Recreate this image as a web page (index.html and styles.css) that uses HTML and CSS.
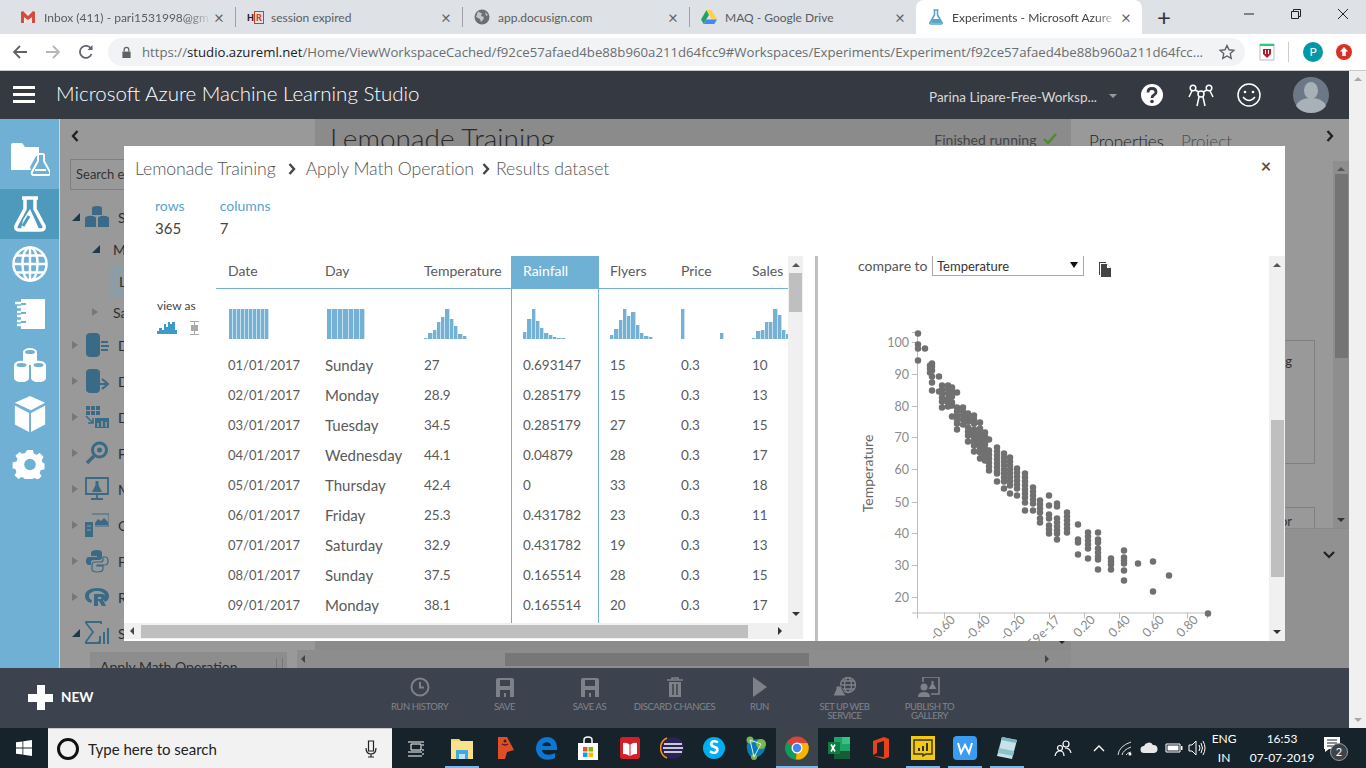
FILE: index.html
```html
<!doctype html>
<html>
    <head>
        <meta charset="utf-8">
        <title>Experiments - Microsoft Azure Machine Learning Studio</title>
        <link rel="stylesheet" href="styles.css">
    </head>
    <body>
        <section class="tabstrip">
            <div class="tab">
                <svg class="tab-icon" viewBox="0 0 16 16"><path fill="#e8e8e8" d="M1 3h14v11H1z"/><path fill="#d54b3d" d="M1 3h3v11H1zM12 3h3v11h-3zM1 3l2-1 5 5 5-5 2 1v3l-7 5-7-5z"/></svg>
                <span class="tab-title tab-fade">Inbox (411) - pari1531998@gm</span>
                <span class="tab-close">×</span>
            </div>
            <div class="tab">
                <span class="hr-icon">H<b>R</b></span>
                <span class="tab-title">session expired</span>
                <span class="tab-close">×</span>
            </div>
            <div class="tab">
                <svg class="tab-icon" viewBox="0 0 16 16"><circle cx="8" cy="8" r="7.500" fill="#6b6f74"/><path fill="#c3c6c9" d="M4 2.500l4 2-1 2.500 3 1-1 3-2 2-1-3-2-1-2-1zM11 3l3 3-2 1z"/></svg>
                <span class="tab-title">app.docusign.com</span>
                <span class="tab-close">×</span>
            </div>
            <div class="tab">
                <svg class="tab-icon" viewBox="0 0 16 16"><path fill="#1fa463" d="M5.500 1L0 10.500l2.700 4.500L8 5.700z"/><path fill="#ffd04b" d="M5.500 1h5L16 10.500h-5.300z"/><path fill="#4687f4" d="M2.700 15h10.600l2.700-4.500H5.300z"/></svg>
                <span class="tab-title">MAQ - Google Drive</span>
                <span class="tab-close">×</span>
            </div>
            <div class="tab tab-active">
                <svg class="tab-icon" viewBox="0 0 16 16"><path fill="none" stroke="#59a5c9" stroke-width="1.600" d="M5.500 1h5M6.500 1v5L2 13.500q-.6 1.500 1 1.500h10q1.600 0 1-1.500L9.500 6V1"/><path fill="#59a5c9" d="M4.500 10h7l2 4H3z"/></svg>
                <span class="tab-title tab-fade">Experiments - Microsoft Azure</span>
                <span class="tab-close">×</span>
            </div>
            <span class="new-tab">+</span>
            <div class="window-controls">
                <svg viewBox="0 0 12 12"><path d="M1 6h10" stroke="#222" fill="none"/></svg>
                <svg viewBox="0 0 12 12"><path d="M1.500 3.500h7v7h-7zM3.500 3.500v-2h7v7h-2" stroke="#222" fill="none"/></svg>
                <svg viewBox="0 0 12 12"><path d="M1 1l10 10M11 1L1 11" stroke="#222" fill="none"/></svg>
            </div>
        </section>

        <section class="toolbar">
            <svg class="nav-btn" viewBox="0 0 16 16"><path d="M15 8H2M8 2L2 8l6 6" fill="none" stroke="#5f6368" stroke-width="1.800"/></svg>
            <svg class="nav-btn" viewBox="0 0 16 16"><path d="M1 8h13M8 2l6 6-6 6" fill="none" stroke="#b4b7bb" stroke-width="1.800"/></svg>
            <svg class="nav-btn" viewBox="0 0 16 16"><path d="M13.500 10a6 6 0 1 1-.3-5" fill="none" stroke="#5f6368" stroke-width="1.800"/><path d="M14.500 1v5h-5z" fill="#5f6368"/></svg>
            <div class="urlbar">
                <svg class="lock" viewBox="0 0 12 14"><path d="M3.500 6V4a2.500 2.500 0 0 1 5 0v2" fill="none" stroke="#5f6368" stroke-width="1.400"/><path d="M1.500 6h9v7h-9z" fill="#5f6368"/></svg>
                <span class="url"><span class="url-scheme">https://</span><span class="url-host">studio.azureml.net</span>/Home/ViewWorkspaceCached/f92ce57afaed4be88b960a211d64fcc9#Workspaces/Experiments/Experiment/f92ce57afaed4be88b960a211d64fcc...</span>
                <svg class="star" viewBox="0 0 16 16"><path d="M8 1.500l2 4.300 4.700.6-3.400 3.200.9 4.700L8 12l-4.200 2.300.9-4.700L1.300 6.400 6 5.800z" fill="none" stroke="#5f6368" stroke-width="1.400"/></svg>
            </div>
            <svg class="ext-mcafee" viewBox="0 0 16 18"><path d="M1 1h14v16H1z" fill="#fff" stroke="#bbb"/><path d="M1 1h14v2H1z" fill="#2ecc71"/><path d="M4 6h8v5l-4 4-4-4z" fill="#b01a2a"/><path d="M6.500 7v4M9.500 7v4" stroke="#fff"/></svg>
            <span class="ext-sep"></span>
            <span class="avatar-small">P</span>
            <svg class="ext-up" viewBox="0 0 16 16"><circle cx="8" cy="8" r="8" fill="#d93025"/><path d="M8 3l4 4.500H9.800V12H6.200V7.500H4z" fill="#fff"/></svg>
        </section>

        <main class="studio">
            <div class="app">
                <header class="app-header">
                    <div class="hamburger"><i></i><i></i><i></i></div>
                    <h1 class="app-title">Microsoft Azure Machine Learning Studio</h1>
                    <span class="workspace">Parina Lipare-Free-Worksp...</span>
                    <span class="caret"></span>
                    <svg class="head-icon help" viewBox="0 0 24 24"><circle cx="12" cy="12" r="11" fill="#fff"/><path d="M8 9.500q0-4 4-4t4 3.500q0 2-2 3t-2 3" fill="none" stroke="#353a42" stroke-width="2.800"/><circle cx="12" cy="18.500" r="1.800" fill="#353a42"/></svg>
                    <svg class="head-icon people-icon" viewBox="0 0 26 24"><g fill="none" stroke="#fff" stroke-width="1.500"><circle cx="5" cy="5" r="2.800"/><circle cx="21" cy="5" r="2.800"/><circle cx="13" cy="11" r="3"/><path d="M1 14l3-6M11 9L7 7M15 9l4-2M25 14l-3-6M9 23l2-9M17 23l-2-9"/></g></svg>
                    <svg class="head-icon smile" viewBox="0 0 24 24"><circle cx="12" cy="12" r="11" fill="none" stroke="#fff" stroke-width="1.500"/><circle cx="8" cy="9" r="1.300" fill="#fff"/><circle cx="16" cy="9" r="1.300" fill="#fff"/><path d="M6 14q6 7 12 0" fill="none" stroke="#fff" stroke-width="1.500"/></svg>
                    <svg class="avatar" viewBox="0 0 36 36"><circle cx="18" cy="18" r="18" fill="#6c7888"/><ellipse cx="18" cy="13.500" rx="7" ry="8.500" fill="#a8b0b8"/><path d="M3 29q3-8 15-8t15 8q-5 7-15 7T3 29z" fill="#a8b0b8"/></svg>
                </header>

                <div class="workarea">
                    <nav class="side-nav">
                        <div class="side-item">
                            <svg viewBox="0 0 40 34"><path d="M1 3q0-2 2-2h9l3 4h14v9h-3l-6 11 1 3H1z" fill="#fff"/><path d="M26 12h8M28 12v7l-6 11q-1 3 2 3h14q3 0 2-3l-6-11v-7M25 28h11" fill="none" stroke="#fff" stroke-width="2"/></svg>
                        </div>
                        <div class="side-item selected">
                            <svg viewBox="0 0 32 36"><path d="M8 2h16M11 3v10L2 30q-1 4 3 4h22q4 0 3-4l-9-17V3" fill="none" stroke="#fff" stroke-width="3.500"/><path d="M9 24l7-11 6 13 3 7H7z" fill="#fff"/><path d="M9 30l6-10" stroke="#4d9abd" stroke-width="3"/></svg>
                        </div>
                        <div class="side-item">
                            <svg viewBox="0 0 38 38"><g fill="none" stroke="#fff" stroke-width="2.600"><circle cx="19" cy="19" r="17.500"/><ellipse cx="19" cy="19" rx="8" ry="17.500"/><path d="M19 1v36M1 19h36M4 10h30M4 28h30"/></g></svg>
                        </div>
                        <div class="side-item">
                            <svg viewBox="0 0 30 30"><path d="M6 0h24v30H6z" fill="#fff"/><path d="M0 4h11q3 2 0 4H2M2 13h9q3 2 0 4H2M2 22h9q3 2 0 4H2" fill="none" stroke="#fff" stroke-width="2.400"/><path d="M6 5h5M6 14h5M6 23h5" stroke="#70b0d4" stroke-width="2"/></svg>
                        </div>
                        <div class="side-item">
                            <svg viewBox="0 0 32 36"><g fill="#fff"><path d="M9 6a7 4 0 0 1 14 0v9a7 4 0 0 1-14 0z"/><path d="M0 19a7 4 0 0 1 15 0v13a7 4 0 0 1-15 0z"/><path d="M17 19a7 4 0 0 1 15 0v13a7 4 0 0 1-15 0z"/></g><g fill="#70b0d4"><ellipse cx="16" cy="6" rx="5" ry="2"/><ellipse cx="7.500" cy="19" rx="5" ry="2"/><ellipse cx="24.500" cy="19" rx="5" ry="2"/></g></svg>
                        </div>
                        <div class="side-item">
                            <svg viewBox="0 0 32 38"><path d="M16 0l16 7-15 8L0 7zM0 10l15 8v20L0 30zM32 10v20l-15 8V18z" fill="#fff"/></svg>
                        </div>
                        <div class="side-item">
                            <svg viewBox="0 0 30 30"><path d="M12 0h6l1 4 3 1 3-2 4 4-2 4 1 2 2 1v6l-4 1-1 3 2 3-4 4-3-2-3 1-1 3h-6l-1-4-3-1-3 2-4-4 2-3-1-3-3-1v-6l4-1 1-3-2-3 4-4 3 2 3-1z" fill="#fff"/><circle cx="15" cy="15" r="6" fill="#70b0d4"/></svg>
                        </div>
                    </nav>

                    <aside class="palette">
                        <svg class="collapse" viewBox="0 0 8 12"><path d="M6.500 1L2 6l4.500 5" fill="none" stroke="#222" stroke-width="2.400"/></svg>
                        <div class="palette-search">Search experiment items</div>
                        <div class="tree">
                            <div class="tree-row tree-open">
                                <svg class="tree-icon" viewBox="0 0 24 24"><g fill="#3a6a85"><path d="M7 3a5 2 0 0 1 10 0v7H7z"/><path d="M0 13a5 2 0 0 1 11 0v9H0z"/><path d="M13 13a5 2 0 0 1 11 0v9H13z"/></g></svg>
                                <span>Saved Datasets</span>
                            </div>
                            <div class="tree-row tree-open tree-sub">
                                <span>My Datasets</span>
                            </div>
                            <div class="tree-row tree-leaf">
                                <span>Lemonade data</span>
                            </div>
                            <div class="tree-row tree-closed tree-sub tree-low">
                                <span>Samples</span>
                            </div>
                            <div class="tree-row tree-big tree-closed">
                                <svg class="tree-icon" viewBox="0 0 24 24"><path d="M1 3a6 3 0 0 1 14 0v18a6 3 0 0 1-14 0z" fill="#3a6a85"/><path d="M16 9h7M16 13h8M16 17h7" stroke="#3a6a85" stroke-width="2"/></svg>
                                <span>Data Format Conversions</span>
                            </div>
                            <div class="tree-row tree-big tree-closed">
                                <svg class="tree-icon" viewBox="0 0 24 24"><path d="M1 3a6 3 0 0 1 14 0v18a6 3 0 0 1-14 0z" fill="#3a6a85"/><path d="M12 15h9M17 10l6 5-6 5" fill="none" stroke="#3a6a85" stroke-width="2.200"/></svg>
                                <span>Data Input and Output</span>
                            </div>
                            <div class="tree-row tree-big tree-closed">
                                <svg class="tree-icon" viewBox="0 0 24 24"><path d="M1 1h14v9H1z" fill="#3a6a85"/><path d="M5.500 1v9M10.500 1v9M1 5.500h14" stroke="#999"/><path d="M1 11l7 7M8 13v5H3" fill="none" stroke="#3a6a85" stroke-width="1.500"/><path d="M10 13h14v10H10z" fill="#3a6a85"/><path d="M13 22v-4M17 22v-6M21 22v-5" stroke="#999" stroke-width="1.500"/></svg>
                                <span>Data Transformation</span>
                            </div>
                            <div class="tree-row tree-big tree-closed">
                                <svg class="tree-icon" viewBox="0 0 24 24"><circle cx="14.500" cy="9" r="7" fill="none" stroke="#3a6a85" stroke-width="3"/><circle cx="14.500" cy="9" r="2.500" fill="#3a6a85"/><path d="M9 15l-7 7" stroke="#3a6a85" stroke-width="3.500"/></svg>
                                <span>Feature Selection</span>
                            </div>
                            <div class="tree-row tree-big tree-closed">
                                <svg class="tree-icon" viewBox="0 0 24 24"><path d="M1 1h22v16H1zM12 17v4M6 22h12" fill="none" stroke="#3a6a85" stroke-width="1.800"/><path d="M9 4h6M10.500 4v4L7 15h10l-3.500-7V4" fill="#3a6a85"/></svg>
                                <span>Machine Learning</span>
                            </div>
                            <div class="tree-row tree-big tree-closed">
                                <svg class="tree-icon" viewBox="0 0 24 24"><path d="M0 9h8v15H0z" fill="#3a6a85"/><path d="M2 13h4M2 17h4" stroke="#999"/><path d="M7 1h17v12H10" fill="none" stroke="#3a6a85"/><path d="M10 10l3-4 3 2 3-3 4 4v3H10z" fill="#3a6a85"/></svg>
                                <span>OpenCV Library Modules</span>
                            </div>
                            <div class="tree-row tree-big tree-closed">
                                <svg class="tree-icon" viewBox="0 0 24 24"><path d="M12 1q-6 0-6 3v3h6v1H4q-3 0-3 4t3 4h2v-3q0-2 3-2h5q3 0 3-3V4q0-3-5-3z" fill="#3a6a85"/><path d="M12 23q6 0 6-3v-3h-6v-1h8q3 0 3-4t-3-4h-2v3q0 2-3 2H10q-3 0-3 3v4q0 3 5 3z" fill="none" stroke="#3a6a85" stroke-width="1.200"/></svg>
                                <span>Python Language Modules</span>
                            </div>
                            <div class="tree-row tree-big tree-closed">
                                <svg class="tree-icon" viewBox="0 0 24 24"><path d="M12 3C5 3 0 6 0 11c0 4 3 6 6 7l1-3q-3-1-3-4c0-3 4-5 8-5s8 2 8 5q0 2-2 3l2 3q4-2 4-6c0-5-5-8-12-8z" fill="#3a6a85"/><path d="M9 9h8q3 0 3 3 0 2-2 3l3 6h-4l-3-5h-1v5H9zm4 3v2h3q1-1 0-2z" fill="#3a6a85"/></svg>
                                <span>R Language Modules</span>
                            </div>
                            <div class="tree-row tree-big tree-open">
                                <svg class="tree-icon" viewBox="0 0 24 24"><path d="M16 3V1H1v1l7 9-8 11h14v-2" fill="none" stroke="#3a6a85" stroke-width="1.800"/><path d="M14 15h2v8h-2zM18 11h2v12h-2zM22 7h2v16h-2z" fill="#3a6a85"/></svg>
                                <span>Statistical Functions</span>
                            </div>
                            <div class="tree-module">Apply Math Operation<span class="grip"></span></div>
                        </div>
                    </aside>

                    <div class="canvas">
                        <div class="canvas-head">
                            <span class="canvas-title">Lemonade Training</span>
                            <span class="canvas-status">Finished running <svg viewBox="0 0 14 12"><path d="M1 6l4 4 8-9" fill="none" stroke="#4c8c2b" stroke-width="2.400"/></svg></span>
                        </div>
                        <div class="canvas-fill"></div>
                        <div class="canvas-scroll">
                            <i class="arrow-left"></i>
                            <span class="canvas-thumb"></span>
                            <i class="arrow-right"></i>
                        </div>
                    </div>

                    <aside class="properties">
                        <div class="properties-tabs">
                            <span class="prop-active">Properties</span><span>Project</span>
                            <svg class="prop-chevron" viewBox="0 0 8 12"><path d="M1.500 1L6 6l-4.500 5" fill="none" stroke="#222" stroke-width="2.400"/></svg>
                        </div>
                        <div class="prop-body">
                            <div class="prop-content">
                                <div class="prop-box">logging</div>
                                <div class="prop-box prop-box-cut">for</div>
                            </div>
                            <div class="prop-scroll"><i class="arrow-up"></i><span></span><i class="arrow-down"></i></div>
                        </div>
                        <div class="prop-footer"><svg viewBox="0 0 12 8"><path d="M1 1l5 5 5-5" fill="none" stroke="#222" stroke-width="2.200"/></svg></div>
                    </aside>
                </div>

                <footer class="commands">
                    <div class="new-btn"><span class="new-plus"></span>NEW</div>
                    <div class="command">
                        <svg viewBox="0 0 20 20"><circle cx="10" cy="10" r="8.500" fill="none" stroke="#7d8288" stroke-width="2"/><path d="M10 5v5.500h4" fill="none" stroke="#7d8288" stroke-width="2"/></svg>
                        <span>RUN HISTORY</span>
                    </div>
                    <div class="command">
                        <svg viewBox="0 0 20 20"><path d="M1 3q0-2 2-2h14q2 0 2 2v17H1z" fill="#7d8288"/><path d="M5 3h10v6H5zM5 13h10v7H5z" fill="#3d434e"/><path d="M9 16h2v4H9z" fill="#7d8288"/></svg>
                        <span>SAVE</span>
                    </div>
                    <div class="command">
                        <svg viewBox="0 0 20 20"><path d="M1 3q0-2 2-2h14q2 0 2 2v17H1z" fill="#7d8288"/><path d="M5 3h10v6H5zM5 13h10v7H5z" fill="#3d434e"/><path d="M9 16h2v4H9z" fill="#7d8288"/></svg>
                        <span>SAVE AS</span>
                    </div>
                    <div class="command">
                        <svg viewBox="0 0 20 20"><path d="M2 3h16M7 3V1h6v2" fill="none" stroke="#7d8288" stroke-width="1.600"/><path d="M4 5h12v15H4z" fill="#7d8288"/><path d="M8 7v11M12 7v11" stroke="#3d434e" stroke-width="1.500"/></svg>
                        <span>DISCARD CHANGES</span>
                    </div>
                    <div class="command">
                        <svg viewBox="0 0 20 20"><path d="M3 0l14 10L3 20z" fill="#7d8288"/></svg>
                        <span>RUN</span>
                    </div>
                    <div class="command">
                        <svg class="wide" viewBox="0 0 24 20"><g fill="none" stroke="#7d8288" stroke-width="1.300"><circle cx="15" cy="8" r="7.500"/><ellipse cx="15" cy="8" rx="3.500" ry="7.500"/><path d="M7.500 8h15M8.500 4h13M8.500 12h13"/></g><path d="M3 9h6v3l4 7H0l3-7z" fill="#7d8288" stroke="#3d434e"/></svg>
                        <span>SET UP WEB SERVICE</span>
                    </div>
                    <div class="command">
                        <svg class="wide" viewBox="0 0 24 20"><path d="M5 5V0h16v17H13" fill="none" stroke="#7d8288" stroke-width="1.600"/><circle cx="6" cy="10" r="3.500" fill="#7d8288"/><path d="M0 20q0-5 6-5t6 5z" fill="#7d8288"/><path d="M12 4h5M13.500 4v3l-3 5h8l-3-5V4" fill="#7d8288"/></svg>
                        <span>PUBLISH TO GALLERY</span>
                    </div>
                </footer>
            </div>

            <div class="page-scroll"><i class="arrow-up"></i><i class="arrow-down"></i></div>

            <section class="modal">
                <div class="modal-title">
                    <span>Lemonade Training</span><svg viewBox="0 0 8 12"><path d="M1.500 1L6 6l-4.500 5" fill="none" stroke="#444" stroke-width="2.400"/></svg>
                    <span>Apply Math Operation</span><svg viewBox="0 0 8 12"><path d="M1.500 1L6 6l-4.500 5" fill="none" stroke="#444" stroke-width="2.400"/></svg>
                    <span>Results dataset</span>
                    <span class="modal-close">×</span>
                </div>
                <div class="stats">
                    <div class="stat"><span>rows</span><b>365</b></div>
                    <div class="stat"><span>columns</span><b>7</b></div>
                </div>
                <div class="results">
                    <div class="table-pane">
                        <div class="table-row-wrap">
                            <div class="view-as">
                                <span>view as</span>
                                <div class="view-icons">
                                    <svg viewBox="0 0 20 12"><path d="M0 12V9h2V6h3v2h2V2h2v3h2V0h2v2h2V0h3v8h2v4z" fill="#3b9bca"/></svg>
                                    <svg viewBox="0 0 9 14"><path d="M0 .5h9M0 13.500h9M4.500 0v14" stroke="#a8a8a8"/><path d="M1 4h7v6H1z" fill="#a8a8a8"/></svg>
                                </div>
                            </div>
                            <div class="table-wrap">
                                <table class="data">
                                    <colgroup><col class="c-date"><col class="c-day"><col class="c-temp"><col class="c-rain"><col class="c-num"><col class="c-num"><col class="c-num"></colgroup>
                                    <thead>
                                        <tr><th>Date</th><th>Day</th><th>Temperature</th><th class="sel">Rainfall</th><th>Flyers</th><th>Price</th><th>Sales</th></tr>
                                    </thead>
                                    <tbody>
                                        <tr class="hist-row">
                                            <td><div class="hist hist-date"><i style="height:30px"></i><i style="height:30px"></i><i style="height:30px"></i><i style="height:30px"></i><i style="height:30px"></i><i style="height:30px"></i><i style="height:30px"></i><i style="height:30px"></i><i style="height:30px"></i><i style="height:30px"></i></div></td>
                                            <td><div class="hist hist-day"><i style="height:30px"></i><i style="height:30px"></i><i style="height:30px"></i><i style="height:30px"></i><i style="height:30px"></i><i style="height:30px"></i><i style="height:30px"></i></div></td>
                                            <td><div class="hist"><i style="height:1px"></i><i style="height:6px"></i><i style="height:9px"></i><i style="height:17px"></i><i style="height:22px"></i><i style="height:30px"></i><i style="height:20px"></i><i style="height:13px"></i><i style="height:5px"></i><i style="height:3px"></i></div></td>
                                            <td class="sel"><div class="hist"><i style="height:7px"></i><i style="height:20px"></i><i style="height:30px"></i><i style="height:18px"></i><i style="height:11px"></i><i style="height:6px"></i><i style="height:4px"></i><i style="height:2px"></i><i style="height:1px"></i><i style="height:1px"></i></div></td>
                                            <td><div class="hist"><i style="height:4px"></i><i style="height:10px"></i><i style="height:19px"></i><i style="height:30px"></i><i style="height:23px"></i><i style="height:27px"></i><i style="height:14px"></i><i style="height:6px"></i><i style="height:3px"></i><i style="height:2px"></i></div></td>
                                            <td><div class="hist"><i style="height:30px"></i><i style="height:0"></i><i style="height:0"></i><i style="height:0"></i><i style="height:0"></i><i style="height:0"></i><i style="height:0"></i><i style="height:0"></i><i style="height:0"></i><i style="height:6px"></i></div></td>
                                            <td><div class="hist"><i style="height:1px"></i><i style="height:8px"></i><i style="height:9px"></i><i style="height:17px"></i><i style="height:17px"></i><i style="height:30px"></i><i style="height:24px"></i><i style="height:9px"></i><i style="height:5px"></i><i style="height:2px"></i></div></td>
                                        </tr>
                                        <tr><td>01/01/2017</td><td>Sunday</td><td>27</td><td class="sel">0.693147</td><td>15</td><td>0.3</td><td>10</td></tr>
                                        <tr><td>02/01/2017</td><td>Monday</td><td>28.9</td><td class="sel">0.285179</td><td>15</td><td>0.3</td><td>13</td></tr>
                                        <tr><td>03/01/2017</td><td>Tuesday</td><td>34.5</td><td class="sel">0.285179</td><td>27</td><td>0.3</td><td>15</td></tr>
                                        <tr><td>04/01/2017</td><td>Wednesday</td><td>44.1</td><td class="sel">0.04879</td><td>28</td><td>0.3</td><td>17</td></tr>
                                        <tr><td>05/01/2017</td><td>Thursday</td><td>42.4</td><td class="sel">0</td><td>33</td><td>0.3</td><td>18</td></tr>
                                        <tr><td>06/01/2017</td><td>Friday</td><td>25.3</td><td class="sel">0.431782</td><td>23</td><td>0.3</td><td>11</td></tr>
                                        <tr><td>07/01/2017</td><td>Saturday</td><td>32.9</td><td class="sel">0.431782</td><td>19</td><td>0.3</td><td>13</td></tr>
                                        <tr><td>08/01/2017</td><td>Sunday</td><td>37.5</td><td class="sel">0.165514</td><td>28</td><td>0.3</td><td>15</td></tr>
                                        <tr><td>09/01/2017</td><td>Monday</td><td>38.1</td><td class="sel">0.165514</td><td>20</td><td>0.3</td><td>17</td></tr>
                                        <tr><td></td><td></td><td></td><td class="sel"></td><td></td><td></td><td></td></tr>
                                    </tbody>
                                </table>
                            </div>
                            <div class="vscroll"><i class="arrow-up"></i><span class="vthumb"></span><i class="arrow-down"></i></div>
                        </div>
                        <div class="hscroll"><i class="arrow-left"></i><span class="hthumb"></span><i class="arrow-right"></i></div>
                    </div>
                    <div class="splitter"></div>
                    <div class="chart-pane">
                        <div class="chart-main">
                            <div class="compare">
                                <span class="compare-label">compare to</span>
                                <div class="compare-select">Temperature<i></i></div>
                                <svg class="copy-icon" viewBox="0 0 12 15"><path d="M0 0h7v1H1v12H0z" fill="#444"/><path d="M2 2h6l4 4v9H2z" fill="#444"/><path d="M8 2v4h4" fill="#fff"/></svg>
                            </div>
                            <svg class="scatter" viewBox="818 284 451 356">
                                <g stroke="#bdbdbd" fill="none">
                                    <path d="M917.500 332V612.500M912 612.500H1208M912 332h5.500M912 342h5.500M912 374h5.500M912 406h5.500M912 437h5.500M912 469h5.500M912 502h5.500M912 533h5.500M912 565h5.500M912 597h5.500"/>
                                    <path d="M917.500 612v6M944.500 612v6M979.500 612v6M1014.500 612v6M1049.500 612v6M1084.500 612v6M1119.500 612v6M1153.500 612v6M1187.500 612v6M1207.500 612v6"/>
                                </g>
                                <g class="tick-y">
                                    <text x="909" y="346">100</text><text x="909" y="378">90</text><text x="909" y="410">80</text><text x="909" y="441">70</text><text x="909" y="473">60</text><text x="909" y="506">50</text><text x="909" y="537">40</text><text x="909" y="569">30</text><text x="909" y="601">20</text>
                                </g>
                                <g class="tick-x">
                                    <text transform="translate(956 620) rotate(-45)">-0.60</text>
                                    <text transform="translate(991 620) rotate(-45)">-0.40</text>
                                    <text transform="translate(1026 620) rotate(-45)">-0.20</text>
                                    <text transform="translate(1061 620) rotate(-45)">-5.59e-17</text>
                                    <text transform="translate(1096 620) rotate(-45)">0.20</text>
                                    <text transform="translate(1131 620) rotate(-45)">0.40</text>
                                    <text transform="translate(1165 620) rotate(-45)">0.60</text>
                                    <text transform="translate(1199 620) rotate(-45)">0.80</text>
                                </g>
                                <text class="axis-label" transform="translate(873 473) rotate(-90)">Temperature</text>
                                <path class="dots" d="M918 333h0M918 344h0M918 348h0M918 360h0M925 348h0M930 365h0M930 368h0M930 372h0M932 363h0M932 366h0M932 370h0M932 376h0M932 382h0M932 390h0M939 376h0M939 391h0M942 385h0M942 389h0M942 393h0M942 397h0M942 401h0M942 407h0M948 385h0M948 389h0M948 393h0M948 398h0M948 402h0M948 406h0M952 387h0M952 391h0M952 396h0M952 402h0M952 405h0M952 416h0M957 392h0M957 407h0M957 411h0M957 415h0M957 419h0M957 423h0M957 429h0M963 407h0M963 411h0M963 415h0M963 419h0M963 424h0M968 413h0M968 417h0M968 421h0M968 427h0M968 431h0M968 435h0M968 441h0M974 415h0M974 419h0M974 423h0M974 429h0M974 433h0M974 437h0M974 441h0M974 445h0M974 451h0M980 422h0M980 428h0M980 432h0M980 436h0M980 440h0M980 444h0M980 448h0M980 452h0M980 458h0M985 432h0M985 436h0M985 440h0M985 444h0M985 448h0M985 452h0M985 456h0M985 460h0M989 439h0M989 450h0M989 454h0M989 458h0M989 462h0M989 466h0M989 470h0M997 447h0M997 451h0M997 455h0M997 459h0M997 463h0M997 467h0M997 471h0M997 473h0M997 481h0M1004 453h0M1004 457h0M1004 461h0M1004 465h0M1004 469h0M1004 473h0M1004 477h0M1004 481h0M1004 488h0M1010 457h0M1010 461h0M1010 465h0M1010 469h0M1010 473h0M1010 477h0M1010 481h0M1010 485h0M1010 493h0M1017 468h0M1017 472h0M1017 476h0M1017 480h0M1017 484h0M1017 488h0M1017 495h0M1025 473h0M1025 477h0M1025 481h0M1025 485h0M1025 489h0M1025 493h0M1025 497h0M1025 502h0M1025 510h0M1033 487h0M1033 491h0M1033 495h0M1033 499h0M1033 503h0M1033 510h0M1040 500h0M1040 504h0M1040 508h0M1040 512h0M1040 518h0M1040 522h0M1049 495h0M1049 505h0M1049 514h0M1049 518h0M1049 525h0M1049 529h0M1049 533h0M1057 503h0M1057 506h0M1057 518h0M1057 522h0M1057 526h0M1057 530h0M1057 533h0M1057 539h0M1067 512h0M1067 516h0M1067 520h0M1067 524h0M1067 528h0M1067 532h0M1078 524h0M1078 539h0M1078 542h0M1078 554h0M1088 532h0M1088 536h0M1088 540h0M1088 544h0M1088 548h0M1088 558h0M1098 532h0M1098 539h0M1098 542h0M1098 548h0M1098 552h0M1098 556h0M1098 559h0M1098 569h0M1111 558h0M1111 561h0M1111 564h0M1111 569h0M1124 550h0M1124 557h0M1124 560h0M1124 563h0M1124 570h0M1124 580h0M1138 563h0M1153 561h0M1153 591h0M1169 575h0M1208 613h0"/>
                            </svg>
                        </div>
                        <div class="vscroll chart-scroll"><i class="arrow-up"></i><span class="vthumb"></span><i class="arrow-down"></i></div>
                    </div>
                </div>
            </section>
        </main>

        <footer class="taskbar">
            <svg class="start" viewBox="0 0 16 16"><path d="M0 2.300l6.500-.9v6.200H0zM7.300 1.300L16 0v7.600H7.300zM0 8.400h6.500v6.200L0 13.700zM7.300 8.400H16V16l-8.700-1.200z" fill="#fff"/></svg>
            <div class="task-search">
                <span class="cortana"></span>
                <span class="task-search-text">Type here to search</span>
                <svg class="mic" viewBox="0 0 12 18"><path d="M3.500 1h5v10h-5zM1 8q0 6 5 6t5-6M6 14v3M3 17h6" fill="none" stroke="#222" stroke-width="1.200"/></svg>
            </div>
            <div class="task-icons">
                <span class="task-item"><svg viewBox="0 0 18 18"><path d="M1 3h16M1 13h14M1 17h14M4 5v6h10V5zM16 5v2M16 10v2M16 14v2" fill="none" stroke="#fff" stroke-width="1"/></svg></span>
                <span class="task-item open"><svg viewBox="0 0 24 24"><path d="M1 3h8l2 2H1z" fill="#f0d36a"/><path d="M1 5h22v18H1z" fill="#fbe28a"/><path d="M6 14h12v9H6z" fill="#3fa9e0"/><path d="M9 18h6v5H9z" fill="#bfe3f5"/></svg></span>
                <span class="task-item"><svg viewBox="0 0 24 24"><path d="M6 1h9l7 13-7 2-2 7H6z" fill="#e04e27"/><path d="M10 8q3 2 6 0" stroke="#40201a" stroke-width="1.500" fill="none"/><circle cx="13" cy="5" r="1.500" fill="#40201a"/></svg></span>
                <span class="task-item"><svg viewBox="0 0 24 24"><path d="M2 13C2 5 8 1 13 1c6 0 10 4 10 11v2H8c0 5 8 6 13 3v5c-6 3-14 2-17-3-1-2-2-4-2-6zm6-3h9c0-5-8-5-9 0z" fill="#0a78d4"/></svg></span>
                <span class="task-item"><svg viewBox="0 0 24 24"><path d="M8 7V4q0-3 4-3t4 3v3" fill="none" stroke="#fff" stroke-width="1.500"/><path d="M2 7h20v17H2z" fill="#fff"/><path d="M7 11h4.500v4.500H7z" fill="#f25022"/><path d="M12.500 11H17v4.500h-4.500z" fill="#7fba00"/><path d="M7 16.500h4.500V21H7z" fill="#00a4ef"/><path d="M12.500 16.500H17V21h-4.500z" fill="#ffb900"/></svg></span>
                <span class="task-item"><svg viewBox="0 0 24 24"><rect x="2" y="1" width="20" height="22" rx="3" fill="#d71e28"/><path d="M5 7q4-1 6.500 1.500V20Q9 17.500 5 18zM19 7q-4-1-6.500 1.500V20q2.500-2.500 6.500-2z" fill="#fff"/></svg></span>
                <span class="task-item"><svg viewBox="0 0 24 24"><circle cx="13" cy="12" r="11" fill="#2c2255"/><path d="M4 8h18M3 12h20M4 16h18" stroke="#fff" stroke-width="1.500"/><path d="M7 2A11 11 0 0 0 7 22" fill="none" stroke="#f7941e" stroke-width="1.500"/></svg></span>
                <span class="task-item"><svg viewBox="0 0 24 24"><circle cx="12" cy="12" r="11" fill="#00aff0"/><text x="12" y="18" class="skype-s">S</text></svg></span>
                <span class="task-item"><svg viewBox="0 0 24 24"><path d="M6 4Q1 12 7 20l5 2q8-3 10-9T17 3z" fill="#0a7db8"/><circle cx="7" cy="4" r="3.500" fill="#79b84a"/><circle cx="18" cy="8" r="5" fill="#79b84a"/><circle cx="11" cy="21" r="3" fill="#79b84a"/><path d="M7 4l11 4-7 13z" fill="none" stroke="#d8ecf5"/></svg></span>
                <span class="task-item chrome open"><svg viewBox="0 0 24 24"><circle cx="12" cy="12" r="11.500" fill="#db4437"/><path d="M12 12L1.500 6.500A11.500 11.500 0 0 0 11 23.500z" fill="#0f9d58"/><path d="M12 12l-1 11.500A11.500 11.500 0 0 0 22.500 7H12z" fill="#f4b400"/><circle cx="12" cy="12" r="5.500" fill="#fff"/><circle cx="12" cy="12" r="4.200" fill="#4285f4"/></svg></span>
                <span class="task-item"><svg viewBox="0 0 24 24"><path d="M7 1h16v22H7z" fill="#21a366"/><path d="M15 1h8v7h-8z" fill="#33c481"/><path d="M7 15h16v8H7z" fill="#185c37"/><path d="M1 6h12v12H1z" fill="#107c41"/><path d="M4 8.500l4 7M8 8.500l-4 7" stroke="#fff" stroke-width="1.600"/></svg></span>
                <span class="task-item"><svg viewBox="0 0 24 24"><path d="M4 5l11-4 5 2v18l-5 2-11-3 11 1V5L8 7v10l-4 2z" fill="#e8421a"/></svg></span>
                <span class="task-item open"><svg viewBox="0 0 24 24"><path d="M0 0h24v24H0z" fill="#f2c811"/><path d="M3 4h18v14h-6l-3 2v-2H3z" fill="none" stroke="#333" stroke-width="1.400"/><path d="M7 15v-3h2v3zM11 15v-5h2v5zM15 15V7h2v8z" fill="#333"/></svg></span>
                <span class="task-item open"><svg viewBox="0 0 24 24"><rect width="24" height="24" rx="4" fill="#3a9bf0"/><path d="M5 7l3 10 4-8 4 8 3-10" fill="none" stroke="#fff" stroke-width="2"/></svg></span>
                <span class="task-item open"><svg viewBox="0 0 24 24"><path d="M7 1l15 3-5 19-15-3z" fill="#c7e3ea"/><path d="M7 1l15 3-1 3-15-3z" fill="#7eb4c4"/><path d="M4 12l15 3-1 5-15-3z" fill="#8ec0cc"/></svg></span>
            </div>
            <div class="tray">
                <svg class="tray-people" viewBox="0 0 18 18"><g fill="none" stroke="#fff" stroke-width="1.200"><circle cx="12" cy="5" r="3"/><circle cx="6" cy="9" r="2.500"/><path d="M1 17q1-5 5-5t4 5M11 9q5 0 6 5"/></g></svg>
                <svg class="tray-caret" viewBox="0 0 12 8"><path d="M1 7l5-5 5 5" fill="none" stroke="#fff" stroke-width="1.300"/></svg>
                <svg class="tray-wifi" viewBox="0 0 16 16"><path d="M1 15Q2 6 14 2M5 15q1-5 9-8M9 15q1-2 5-3" fill="none" stroke="#ddd"/><circle cx="13" cy="14" r="1.500" fill="#fff"/></svg>
                <svg class="tray-cloud" viewBox="0 0 18 12"><path d="M4 11a3.500 3.500 0 0 1 0-7 5 5 0 0 1 9-1 4 4 0 0 1 1 8z" fill="#e8e8e8"/></svg>
                <svg class="tray-battery" viewBox="0 0 18 12"><path d="M1 2h14v8H1z" fill="none" stroke="#fff"/><path d="M2.500 3.500h11v5h-11z" fill="#fff"/><path d="M16 4h1.500v4H16z" fill="#fff"/></svg>
                <svg class="tray-volume" viewBox="0 0 18 16"><path d="M1 5h3l4-4v14l-4-4H1z" fill="none" stroke="#fff"/><path d="M11 5q2 3 0 6M13 3q3 5 0 10M15 1q4 7 0 14" fill="none" stroke="#fff"/></svg>
                <div class="tray-lang"><span>ENG</span><span>IN</span></div>
                <div class="tray-clock"><span>16:53</span><span>07-07-2019</span></div>
                <div class="tray-notify">
                    <svg viewBox="0 0 18 16"><path d="M1 1h16v12H6l-4 3v-3H1z" fill="#fff"/><path d="M4 4h10M4 7h10M4 10h7" stroke="#17232b"/></svg>
                    <span class="tray-badge">2</span>
                </div>
            </div>
        </footer>
    </body>
</html>
```
FILE: styles.css
```css
html,
body {
    margin: 0;
    height: 768px;
    overflow: hidden;
}
body {
    font-family: Lato, "Open Sans", sans-serif;
    color: #333;
    display: flex;
    flex-direction: column;
    width: 1366px;
}
i {
    display: block;
}

/* browser tabs */
.tabstrip {
    height: 34px;
    background: #dee1e6;
    display: flex;
    padding-left: 8px;
    box-sizing: border-box;
    flex: none;
}
.tab {
    width: 227px;
    height: 34px;
    display: flex;
    align-items: center;
    box-sizing: border-box;
    padding: 0 8px 0 12px;
    position: relative;
    font-size: 12px;
    color: #5a5d61;
}
.tab + .tab::before {
    content: "";
    position: absolute;
    left: 0;
    top: 7px;
    height: 20px;
    width: 1px;
    background: #9da0a5;
}
.tab-icon {
    width: 16px;
    height: 16px;
    flex: none;
    margin-right: 8px;
}
.hr-icon {
    width: 16px;
    flex: none;
    margin-right: 8px;
    font-weight: 900;
    font-size: 9px;
    color: #222;
    white-space: nowrap;
}
.hr-icon b {
    color: #d9362c;
    border: 1px solid #d9362c;
    padding: 0 1px;
}
.tab-title {
    flex: 1;
    white-space: nowrap;
    overflow: hidden;
}
.tab-fade {
    mask-image: linear-gradient(to right, #000 86%, transparent);
    -webkit-mask-image: linear-gradient(to right, #000 86%, transparent);
}
.tab-close {
    flex: none;
    width: 16px;
    text-align: center;
    font-size: 17px;
    color: #5f6368;
}
.tab-active {
    background: #fff;
    border-radius: 8px 8px 0 0;
    color: #444;
    width: 226px;
}
.tab-active::before,
.tab-active + .new-tab::before {
    display: none;
}
.new-tab {
    width: 44px;
    text-align: center;
    font-size: 24px;
    line-height: 34px;
    color: #333;
}
.window-controls {
    margin-left: auto;
    display: flex;
    gap: 35px;
    padding: 8px 17px 0 0;
}
.window-controls svg {
    width: 12px;
    height: 12px;
}

/* address bar */
.toolbar {
    height: 37px;
    flex: none;
    background: #fff;
    display: flex;
    align-items: center;
    padding: 0 12px;
    box-sizing: border-box;
    border-bottom: 1px solid #c8c8c8;
}
.nav-btn {
    width: 16px;
    height: 16px;
    margin-right: 17px;
}
.urlbar {
    height: 28px;
    width: 1137px;
    margin-left: -3px;
    background: #f1f3f4;
    border-radius: 14px;
    display: flex;
    align-items: center;
    padding: 0 10px 0 13px;
    box-sizing: border-box;
    font-size: 14px;
    color: #6a6d71;
}
.lock {
    width: 11px;
    height: 13px;
    margin-right: 10px;
}
.url {
    flex: 1;
    white-space: nowrap;
    overflow: hidden;
    font-family: "Open Sans", sans-serif;
    font-size: 13.200px;
}
.url-host {
    color: #202124;
}
.star {
    width: 16px;
    height: 16px;
    margin-left: 6px;
}
.ext-mcafee {
    width: 16px;
    height: 18px;
    margin-left: 14px;
}
.ext-sep {
    width: 1px;
    height: 20px;
    background: #ccc;
    margin: 0 14px 0 13px;
}
.avatar-small {
    width: 20px;
    height: 20px;
    border-radius: 50%;
    background: #0097a7;
    color: #fff;
    font-size: 12px;
    line-height: 20px;
    text-align: center;
}
.ext-up {
    width: 16px;
    height: 16px;
    margin-left: 13px;
}

/* studio page */
.studio {
    height: 657px;
    flex: none;
    display: flex;
    position: relative;
}
.app {
    width: 1349px;
    display: flex;
    flex-direction: column;
}
.app-header {
    height: 48px;
    flex: none;
    background: #353a42;
    display: flex;
    align-items: center;
    padding-left: 13px;
}
.hamburger {
    width: 22px;
    margin: 0 21px 2px 0;
}
.hamburger i {
    height: 3px;
    background: #fff;
    margin: 4px 0;
}
.app-title {
    margin: 0 0 5px;
    font-size: 20.500px;
    font-weight: 300;
    color: #fff;
    width: 873px;
}
.workspace {
    font-size: 13.500px;
    color: #d8d8d8;
    width: 180px;
    white-space: nowrap;
    margin-top: 4px;
}
.caret {
    width: 0;
    height: 0;
    border: 4px solid transparent;
    border-top-color: #999;
    border-bottom: 0;
    margin-top: 2px;
}
.head-icon {
    width: 24px;
    height: 24px;
}
.help {
    margin-left: 23px;
}
.people-icon {
    width: 26px;
    margin-left: 24px;
}
.smile {
    margin-left: 23px;
}
.avatar {
    width: 36px;
    height: 36px;
    margin-left: 32px;
}
.workarea {
    flex: 1;
    display: flex;
    min-height: 0;
    background: #999;
}
.side-nav {
    width: 59px;
    flex: none;
    background: #6fb0d4;
    border-right: 1px solid #c3d8e4;
    padding-top: 20px;
    box-sizing: content-box;
}
.side-item {
    height: 50px;
    display: flex;
    align-items: center;
    justify-content: center;
}
.side-item.selected {
    background: #4d9abd;
}
.side-item svg {
    height: 36px;
    width: 40px;
}
.side-item:nth-child(1) svg {
    height: 34px;
    margin-top: -10px;
}
.side-item:nth-child(4) svg {
    height: 30px;
}
.side-item:nth-child(7) svg {
    height: 29px;
}
.palette {
    width: 255px;
    flex: none;
    box-sizing: border-box;
    position: relative;
    padding: 40px 0 0 10px;
    background: #999;
    overflow: hidden;
}
.collapse {
    position: absolute;
    left: 11px;
    top: 11px;
    width: 8px;
    height: 12px;
}
.palette-search {
    height: 31px;
    box-sizing: border-box;
    border: 1px solid #7f7f7f;
    font-size: 13px;
    line-height: 29px;
    padding-left: 5px;
    width: 230px;
}
.tree {
    margin: 11px 0 0 -10px;
    font-size: 14px;
    color: #2e2e2e;
}
.tree-row {
    height: 32px;
    display: flex;
    align-items: center;
    position: relative;
    padding-left: 57px;
    white-space: nowrap;
}
.tree-row span {
    margin-left: 9px;
}
.tree-icon {
    width: 24px;
    height: 24px;
    margin-left: -32px;
    flex: none;
}
.tree-row::before {
    content: "";
    position: absolute;
    left: 12px;
    top: 50%;
    margin-top: -4px;
    border: 4px solid transparent;
}
.tree-open::before {
    border-right-color: #1c3b4d;
    border-bottom-color: #1c3b4d;
}
.tree-closed::before {
    border-left: 6px solid #777;
    border-right: 0;
}
.tree-sub {
    padding-left: 44px;
}
.tree-sub::before {
    left: 32px;
}
.tree-leaf {
    margin-left: 50px;
    background: #8e9ca5;
    padding-left: 0;
}
.tree-low {
    height: 30px;
}
.tree-big {
    height: 36px;
}
.tree-module {
    margin: 1px 28px 0 30px;
    height: 30px;
    background: #8d8d8d;
    padding: 6px 0 0 10px;
    box-sizing: border-box;
    position: relative;
    color: #2e2e2e;
}
.grip {
    position: absolute;
    right: 4px;
    top: 6px;
    width: 5px;
    height: 10px;
    border-left: 1px solid #777;
    border-right: 1px solid #777;
}
.canvas {
    width: 756px;
    flex: none;
    background: #8b8b8b;
    display: flex;
    flex-direction: column;
}
.canvas-head {
    height: 40px;
    display: flex;
    justify-content: space-between;
    padding: 2px 14px 0 15px;
    overflow: hidden;
    flex: none;
    color: #2a2a2a;
}
.canvas-title {
    font-size: 28px;
    font-weight: 300;
}
.canvas-status {
    font-size: 14px;
    color: #444;
    padding-top: 10px;
}
.canvas-status svg {
    width: 14px;
    height: 12px;
    margin-left: 3px;
}
.canvas-fill {
    flex: 1;
    position: relative;
}
.canvas-fill::after {
    content: "";
    position: absolute;
    right: 5px;
    bottom: 6px;
    border: 4px solid transparent;
    border-top-color: #222;
    border-bottom: 0;
}
.canvas-scroll {
    height: 18px;
    flex: none;
    margin-left: -18px;
    position: relative;
    display: flex;
    align-items: center;
    padding-left: 208px;
    background: #8d8d8d;
}
.canvas-thumb {
    width: 304px;
    height: 13px;
    background: #777;
}
.canvas-scroll .arrow-left,
.canvas-scroll .arrow-right {
    position: absolute;
    top: 5px;
}
.canvas-scroll .arrow-left {
    left: 4px;
    border-right-color: #444;
}
.canvas-scroll .arrow-right {
    right: 22px;
    border-left-color: #444;
}
.properties {
    flex: 1;
    display: flex;
    flex-direction: column;
    position: relative;
    background: #999;
}
.properties-tabs {
    height: 30px;
    padding: 12px 0 0 18px;
    font-size: 17px;
    flex: none;
    color: #222;
    position: relative;
    font-weight: 300;
}
.properties-tabs span + span {
    color: #4d4d4d;
    margin-left: 17px;
}
.prop-chevron {
    position: absolute;
    right: 15px;
    top: 11px;
    width: 8px;
    height: 12px;
}
.prop-body {
    height: 367px;
    display: flex;
    flex: none;
    border-bottom: 1px solid #8a8a8a;
}
.prop-content {
    flex: 1;
}
.prop-box {
    margin: 179px 18px 0 -100px;
    height: 124px;
    border: 1px solid #7f7f7f;
    text-align: right;
    padding: 12px 22px 0 0;
    font-size: 13px;
    box-sizing: border-box;
}
.prop-box-cut {
    margin-top: 43px;
    height: 22px;
    border-bottom: 0;
    padding-top: 5px;
}
.prop-scroll {
    width: 16px;
    background: #8e8e8e;
    position: relative;
    display: flex;
    flex-direction: column;
    align-items: center;
}
.prop-scroll span {
    width: 13px;
    height: 184px;
    background: #747474;
    margin-top: 3px;
}
.prop-scroll .arrow-up {
    margin: 6px 0 0;
    border-bottom-color: #555;
}
.prop-scroll .arrow-down {
    margin-top: auto;
    margin-bottom: 6px;
    border-top-color: #333;
}
.prop-footer {
    flex: 1;
    background: #919191;
    text-align: right;
    padding: 14px 14px 0 0;
}
.prop-footer svg {
    width: 12px;
    height: 8px;
}

/* scroll arrows */
.arrow-up,
.arrow-down,
.arrow-left,
.arrow-right {
    width: 0;
    height: 0;
    border: 4px solid transparent;
    flex: none;
}
.arrow-up {
    border-bottom-color: #555;
    border-top: 0;
}
.arrow-down {
    border-top-color: #333;
    border-bottom: 0;
}
.arrow-left {
    border-right-color: #444;
    border-left: 0;
}
.arrow-right {
    border-left-color: #333;
    border-right: 0;
}
.page-scroll {
    flex: 1;
    background: #f0f0f0;
    height: 657px;
    display: flex;
    flex-direction: column;
    align-items: center;
    padding: 6px 0;
    box-sizing: border-box;
    justify-content: space-between;
}
.page-scroll .arrow-up {
    border-bottom-color: #a8a8a8;
}
.page-scroll .arrow-down {
    border-top-color: #a8a8a8;
}

/* bottom command bar */
.commands {
    height: 60px;
    flex: none;
    background: #3d434e;
    display: flex;
    padding-top: 9px;
    box-sizing: border-box;
}
.new-btn {
    width: 377px;
    flex: none;
    display: flex;
    align-items: flex-start;
    padding: 8px 0 0 28px;
    box-sizing: border-box;
    font-size: 13.500px;
    font-weight: 700;
    color: #fff;
    line-height: 25px;
}
.new-plus {
    width: 25px;
    height: 25px;
    margin-right: 8px;
    background:
        linear-gradient(#fff, #fff) center / 25px 8px no-repeat,
        linear-gradient(#fff, #fff) center / 8px 25px no-repeat;
}
.command {
    width: 85px;
    flex: none;
    display: flex;
    flex-direction: column;
    align-items: center;
    text-align: center;
    font-size: 9.500px;
    letter-spacing: -.45px;
    line-height: 9px;
    color: #80858b;
}
.command svg {
    height: 20px;
    width: 20px;
    margin-bottom: 5px;
}
.command svg.wide {
    width: 24px;
}
.command span {
    width: 62px;
}
.command:nth-child(5) span {
    width: 85px;
    white-space: nowrap;
}

/* results dialog */
.modal {
    position: absolute;
    left: 124px;
    top: 75px;
    width: 1161px;
    height: 495px;
    background: #fff;
    display: flex;
    flex-direction: column;
}
.modal-title {
    height: 46px;
    display: flex;
    align-items: center;
    padding: 0 0 2px 11px;
    box-sizing: border-box;
    font-size: 17.700px;
    font-weight: 300;
    color: #555;
    flex: none;
    letter-spacing: -.08px;
}
.modal-title svg {
    width: 8px;
    height: 12px;
    margin: 1px 10px 0 12px;
}
.modal-title svg + span + svg {
    margin: 1px 6px 0 8px;
}
.modal-close {
    margin: -4px 14px 0 auto;
    font-size: 18px;
    font-weight: 700;
    color: #555;
}
.stats {
    height: 64px;
    display: flex;
    flex: none;
    padding-left: 31px;
    gap: 35px;
}
.stat span {
    display: block;
    font-size: 14px;
    color: #59a3cf;
    margin-top: 4px;
    line-height: 20px;
}
.stat b {
    display: block;
    font-weight: 400;
    font-size: 15px;
    color: #444;
    line-height: 24px;
}
.results {
    height: 385px;
    display: flex;
}
.table-pane {
    width: 679px;
    flex: none;
    display: flex;
    flex-direction: column;
}
.table-row-wrap {
    height: 367px;
    display: flex;
    flex: none;
}
.view-as {
    width: 92px;
    flex: none;
    padding: 42px 0 0 33px;
    box-sizing: border-box;
    font-size: 12px;
    color: #444;
}
.view-icons {
    display: flex;
    align-items: center;
    margin-top: 8px;
    gap: 13px;
}
.view-icons svg:first-child {
    width: 20px;
    height: 12px;
}
.view-icons svg:last-child {
    width: 9px;
    height: 14px;
}
.table-wrap {
    width: 572px;
    flex: none;
    overflow: hidden;
}
.data {
    border-collapse: separate;
    border-spacing: 0;
    table-layout: fixed;
    width: 596px;
    font-size: 13.500px;
    color: #5a5a5a;
}
.c-date {
    width: 97px;
}
.c-day,
.c-temp {
    width: 99px;
}
.c-rain {
    width: 88px;
}
.c-num {
    width: 71px;
}
.data th {
    height: 28px;
    font-weight: 400;
    font-size: 14px;
    text-align: left;
    padding: 0 0 4px 12px;
    border-bottom: 1px solid #6fb1d5;
    color: #5a5a5a;
    white-space: nowrap;
}
.data th.sel {
    background: #6fb1d5;
    color: #fff;
}
.data td {
    height: 29px;
    padding: 0 0 1px 12px;
    white-space: nowrap;
}
.data th:nth-child(n+5),
.data td:nth-child(n+5) {
    padding-left: 11px;
}
.data td:nth-child(1) {
    font-size: 13px;
}
.data td:nth-child(2) {
    font-size: 15px;
}
.data td.sel {
    border-left: 1px solid #6fb1d5;
    border-right: 1px solid #6fb1d5;
    padding-left: 11px;
}
.hist-row td {
    height: 61px;
    padding-top: 0;
    padding-bottom: 0;
    vertical-align: top;
}
.hist {
    display: flex;
    align-items: flex-end;
    height: 30px;
    width: 43px;
    margin-top: 20px;
}
.hist i {
    flex: 1;
    background: #74b1d4;
    box-sizing: border-box;
    border-right: 1px solid #c8e1ee;
}
.hist-date {
    width: 40px;
    margin-left: 1px;
}
.hist-day {
    width: 38px;
    margin-left: 2px;
}
.vscroll {
    width: 15px;
    flex: none;
    background: #f0f0f0;
    display: flex;
    flex-direction: column;
    align-items: center;
    box-sizing: border-box;
    padding: 7px 0;
}
.vthumb {
    display: block;
    width: 13px;
    height: 39px;
    background: #bfbfbf;
    margin-top: 6px;
}
.vscroll .arrow-down {
    margin-top: auto;
}
.hscroll {
    height: 16px;
    background: #f0f0f0;
    display: flex;
    align-items: center;
    padding: 0 21px 0 6px;
}
.hthumb {
    width: 607px;
    height: 13px;
    background: #bfbfbf;
    margin-left: 7px;
}
.hscroll .arrow-right {
    margin-left: auto;
}
.splitter {
    width: 3px;
    margin-left: 12px;
    background: #c0c0c0;
    flex: none;
}
.chart-pane {
    flex: 1;
    display: flex;
    min-width: 0;
}
.chart-main {
    flex: 1;
    display: flex;
    flex-direction: column;
    min-width: 0;
}
.compare {
    height: 28px;
    flex: none;
    display: flex;
    align-items: flex-start;
    padding-left: 40px;
    font-size: 14px;
    color: #555;
}
.compare-label {
    line-height: 20px;
    width: 74px;
    flex: none;
}
.compare-select {
    width: 152px;
    height: 20px;
    box-sizing: border-box;
    border: 1px solid #aaa;
    border-top: 0;
    font-size: 13px;
    line-height: 20px;
    padding-left: 4px;
    position: relative;
    color: #333;
}
.compare-select i {
    position: absolute;
    right: 5px;
    top: 6px;
    border: 4px solid transparent;
    border-top: 6px solid #111;
    border-bottom: 0;
}
.copy-icon {
    width: 12px;
    height: 15px;
    margin: 6px 0 0 15px;
}
.scatter {
    flex: 1;
    min-height: 0;
    width: 451px;
}
.dots {
    fill: none;
    stroke: #707070;
    stroke-width: 6.500;
    stroke-linecap: round;
}
.tick-y text,
.tick-x text {
    font-size: 12.500px;
    fill: #8a8a8a;
    text-anchor: end;
}
.axis-label {
    font-size: 14px;
    fill: #666;
    text-anchor: middle;
}
.chart-scroll {
    width: 16px;
}
.chart-scroll .vthumb {
    height: 157px;
    margin-top: 153px;
}

/* windows taskbar */
.taskbar {
    height: 40px;
    flex: none;
    background: #17232b;
    display: flex;
    align-items: center;
    color: #fff;
}
.start {
    width: 16px;
    height: 16px;
    margin: 0 16px;
    flex: none;
}
.task-search {
    width: 344px;
    height: 40px;
    flex: none;
    background: #f2f2f2;
    border-top: 1px solid #c9c9c9;
    box-sizing: border-box;
    display: flex;
    align-items: center;
    padding-left: 9px;
    color: #222;
}
.cortana {
    width: 22px;
    height: 22px;
    box-sizing: border-box;
    border: 3px solid #111;
    border-radius: 50%;
    margin-right: 9px;
}
.task-search-text {
    font-size: 15px;
    flex: 1;
}
.mic {
    width: 12px;
    height: 18px;
    margin-right: 15px;
}
.task-icons {
    display: flex;
    margin-left: 3px;
    flex: none;
}
.task-item {
    width: 41.950px;
    height: 40px;
    display: flex;
    align-items: center;
    justify-content: center;
    position: relative;
}
.task-item svg {
    width: 24px;
    height: 24px;
}
.task-item:first-child {
    margin-right: 4px;
}
.task-item:first-child svg {
    width: 18px;
    height: 18px;
}
.task-item.open::after {
    content: "";
    position: absolute;
    bottom: 0;
    left: 4px;
    right: 4px;
    height: 2px;
    background: #76b9ed;
}
.task-item.chrome {
    background: #3a444a;
}
.task-item.chrome::after {
    left: 0;
    right: 0;
}
.skype-s {
    font-size: 18px;
    font-weight: 900;
    fill: #fff;
    text-anchor: middle;
}
.tray {
    display: flex;
    align-items: center;
    margin-left: 26px;
    flex: 1;
    min-width: 0;
}
.tray svg {
    flex: none;
}
.tray-people {
    width: 18px;
    height: 18px;
    margin-right: 21px;
}
.tray-caret {
    width: 12px;
    height: 8px;
    margin-right: 12px;
}
.tray-wifi {
    width: 16px;
    height: 16px;
    margin-right: 7px;
}
.tray-cloud {
    width: 18px;
    height: 12px;
    margin-right: 7px;
}
.tray-battery {
    width: 18px;
    height: 12px;
    margin-right: 5px;
}
.tray-volume {
    width: 18px;
    height: 16px;
    margin-right: 4px;
}
.tray-lang,
.tray-clock {
    display: flex;
    flex-direction: column;
    align-items: center;
    font-size: 12px;
    line-height: 19px;
    white-space: nowrap;
}
.tray-lang {
    width: 28px;
    margin-right: 13px;
}
.tray-clock {
    width: 62px;
    margin-right: 10px;
}
.tray-notify {
    position: relative;
    width: 24px;
    height: 24px;
}
.tray-notify svg {
    width: 18px;
    height: 16px;
    position: absolute;
    left: 0;
    top: 0;
}
.tray-badge {
    position: absolute;
    left: 7px;
    top: 7px;
    width: 16px;
    height: 16px;
    border-radius: 50%;
    background: #3d4348;
    border: 1px solid #999;
    font-size: 11px;
    line-height: 16px;
    text-align: center;
}
```
